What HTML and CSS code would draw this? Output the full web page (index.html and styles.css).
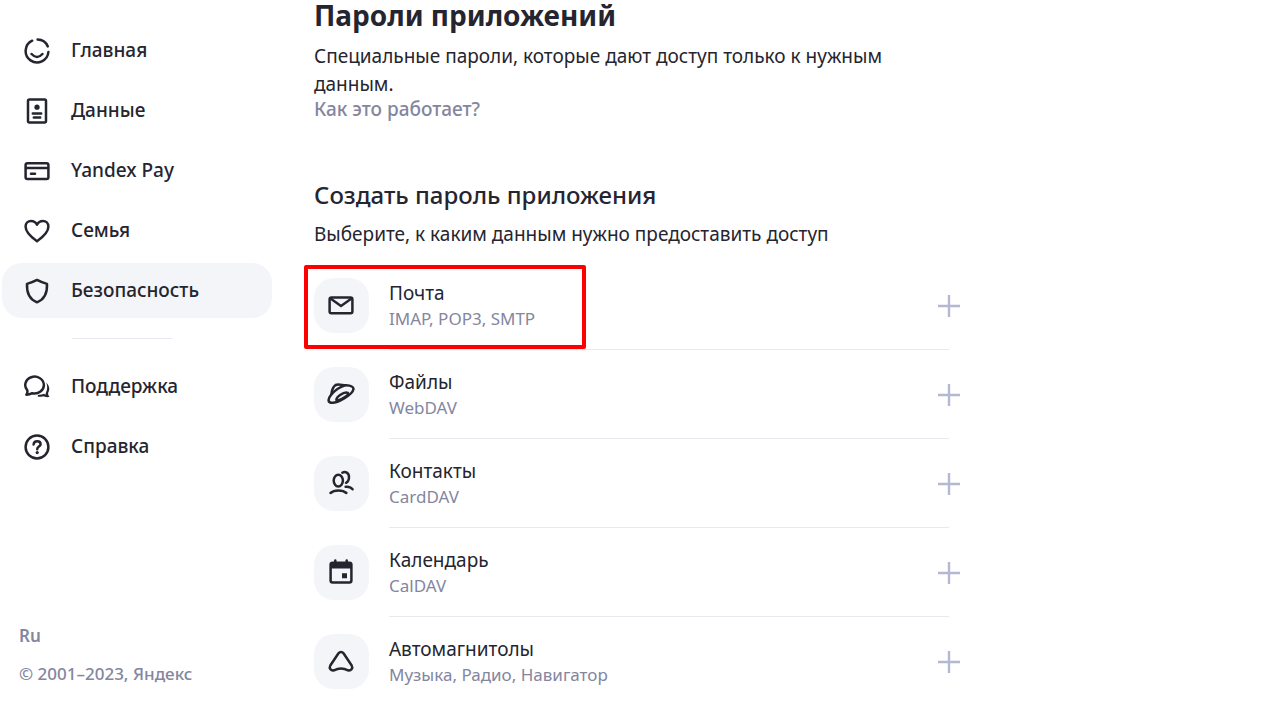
FILE: index.html
```html
<!DOCTYPE html>
<html lang="ru">
<head>
<meta charset="utf-8">
<meta name="viewport" content="width=device-width, initial-scale=1">
<title>Пароли приложений</title>
<link rel="stylesheet" href="styles.css">
</head>
<body>
<div class="layout">
  <aside class="sidebar">
    <nav class="nav">
      <a class="nav-link" href="#home"><svg class="icon" viewBox="0 0 28 28"><path d="M9.2 3.7A11.4 11.4 0 1 0 25.4 15M14.6 2.6A11.4 11.4 0 0 1 24.8 9.4M8.6 17Q14 23 19.4 17"/></svg><span class="nav-label">Главная</span></a>
      <a class="nav-link" href="#data"><svg class="icon" viewBox="0 0 28 28"><rect x="5" y="2.6" width="18" height="23" rx="1.5"/><circle class="solid" cx="14" cy="10.2" r="2.6"/><path d="M9.8 16.4h8.4M10.8 20.4h6.4"/></svg><span class="nav-label">Данные</span></a>
      <a class="nav-link" href="#pay"><svg class="icon" viewBox="0 0 28 28"><rect x="2.6" y="6.2" width="22.8" height="15.8" rx="1.8"/><path d="M3 11h22M8 16.7h4"/></svg><span class="nav-label">Yandex Pay</span></a>
      <a class="nav-link" href="#family"><svg class="icon" viewBox="0 0 28 28"><path d="M14 24.2C6 18.5 2.6 14.5 2.6 9.7C2.6 6 5.2 4 8 4C11 4 13 5.6 14 7.8C15 5.6 17 4 20 4C22.8 4 25.4 6 25.4 9.7C25.4 14.5 22 18.5 14 24.2Z"/></svg><span class="nav-label">Семья</span></a>
      <a class="nav-link active" href="#security" aria-current="page"><svg class="icon" viewBox="0 0 28 28"><path d="M14 2.9C10.6 4.7 7.4 6 4 6.9C3.6 15 5.5 22 14 25.3C22.5 22 24.4 15 24 6.9C20.6 6 17.4 4.7 14 2.9Z"/></svg><span class="nav-label">Безопасность</span></a>
    </nav>
    <hr class="nav-divider">
    <nav class="nav">
      <a class="nav-link" href="#support"><svg class="icon" viewBox="0 0 28 28"><path d="M3.4 21.8C4.4 20.3 4.6 18.8 4.3 17.3A9.3 8.4 0 1 1 9.3 20.2C7.4 21.3 5.4 21.8 3.4 21.8Z"/><path class="solid" d="M23.2 9.6C26.4 12.6 27.2 16.6 25.1 19.9C25 21.6 25.6 22.7 26.6 23.8C23.8 24.7 21.6 23.7 20.2 23.2C18.2 24 16.2 24 14.6 23.6L15 21.9C17.2 21.6 19.5 21.3 20.9 20.7L22.9 21.8C22.5 20.8 22.7 19.8 23.2 19C24.7 16 24.3 12.6 23.2 9.6Z"/></svg><span class="nav-label">Поддержка</span></a>
      <a class="nav-link" href="#help"><svg class="icon" viewBox="0 0 28 28"><circle cx="14" cy="14" r="11.4"/><path d="M10.6 11.5C10.8 9.4 12.2 8.3 14.2 8.3C16.3 8.3 17.6 9.5 17.6 11.2C17.6 13.6 14.2 13.6 14.2 16.2"/><circle class="solid" cx="14.2" cy="19.6" r="1.6"/></svg><span class="nav-label">Справка</span></a>
    </nav>
    <footer class="footer">
      <a class="lang" href="#lang">Ru</a>
      <span>© 2001–2023, Яндекс</span>
    </footer>
  </aside>

  <main class="content">
    <h1 class="title">Пароли приложений</h1>
    <p class="text">Специальные пароли, которые дают доступ только к нужным данным.</p>
    <a class="how" href="#how">Как это работает?</a>
    <h2 class="subtitle">Создать пароль приложения</h2>
    <p class="text">Выберите, к каким данным нужно предоставить доступ</p>
    <ul class="apps">
      <li class="app marked">
        <span class="tile"><svg class="icon" viewBox="0 0 28 28"><rect x="2.6" y="6.6" width="22.8" height="15.6" rx="1.8"/><path d="M3.5 7.6L14 15L24.5 7.6"/></svg></span>
        <div class="app-body"><div class="app-text"><h3 class="app-name">Почта</h3><p class="app-note">IMAP, POP3, SMTP</p></div>
        <button class="add" type="button" aria-label="Добавить: Почта"><svg class="plus" viewBox="0 0 22 22"><path d="M11 0v22M0 11h22"/></svg></button></div>
      </li>
      <li class="app">
        <span class="tile"><svg class="icon" viewBox="0 0 28 28"><path d="M4 22.7C.5 22 1 18.5 4.5 14.2C4.8 10.5 6.6 6.4 8.6 5C11.2 3.9 14.5 5 19 5.3C24 5.6 26.9 6.8 26.4 9.4C25.6 14.5 10 23.9 4 22.7Z"/><path d="M4.5 14.2C8.5 9.8 13 7 18 5.4"/><path d="M9.8 21C7.6 17.5 17.2 11.3 20.8 12.9C23 14.2 17 18.5 9.8 21Z"/></svg></span>
        <div class="app-body"><div class="app-text"><h3 class="app-name">Файлы</h3><p class="app-note">WebDAV</p></div>
        <button class="add" type="button" aria-label="Добавить: Файлы"><svg class="plus" viewBox="0 0 22 22"><path d="M11 0v22M0 11h22"/></svg></button></div>
      </li>
      <li class="app">
        <span class="tile"><svg class="icon" viewBox="0 0 28 28"><ellipse cx="11.3" cy="11.6" rx="4.6" ry="5.8"/><path d="M3.5 24C7 20.6 15.8 20.6 19.4 24M15.3 3.7C18.3 1.8 22 4 22 8C22 10.8 20.8 13 19 13.8M18.6 17.8C21.4 17.5 24 18.4 25.6 20.3"/></svg></span>
        <div class="app-body"><div class="app-text"><h3 class="app-name">Контакты</h3><p class="app-note">CardDAV</p></div>
        <button class="add" type="button" aria-label="Добавить: Контакты"><svg class="plus" viewBox="0 0 22 22"><path d="M11 0v22M0 11h22"/></svg></button></div>
      </li>
      <li class="app">
        <span class="tile"><svg class="icon" viewBox="0 0 28 28"><rect x="3.6" y="4.8" width="20.8" height="19.8" rx="2"/><path class="solid" d="M3.5 5h21v5.5h-21zM15 15.3h5v5h-5z"/><path d="M8.3 2.6v3M19.7 2.6v3"/></svg></span>
        <div class="app-body"><div class="app-text"><h3 class="app-name">Календарь</h3><p class="app-note">CalDAV</p></div>
        <button class="add" type="button" aria-label="Добавить: Календарь"><svg class="plus" viewBox="0 0 22 22"><path d="M11 0v22M0 11h22"/></svg></button></div>
      </li>
      <li class="app">
        <span class="tile"><svg class="icon" viewBox="0 0 28 28"><path d="M11.5 6.3C12.8 4.6 15.2 4.6 16.5 6.3L24.7 18.5C26.3 21.3 24 24 21 23.3C16.5 21 11.5 21 7 23.3C4 24 1.7 21.3 3.3 18.5Z"/></svg></span>
        <div class="app-body"><div class="app-text"><h3 class="app-name">Автомагнитолы</h3><p class="app-note">Музыка, Радио, Навигатор</p></div>
        <button class="add" type="button" aria-label="Добавить: Автомагнитолы"><svg class="plus" viewBox="0 0 22 22"><path d="M11 0v22M0 11h22"/></svg></button></div>
      </li>
    </ul>
  </main>
</div>
</body>
</html>
```
FILE: styles.css
```css
*, *::before { box-sizing: border-box; }
body {
  margin: 0;
  background: #fff;
  color: #252530;
  font-family: "Noto Sans", "Open Sans", sans-serif;
  font-size: 19px;
  line-height: 28px;
}
h1, h2, h3, p, ul { margin: 0; padding: 0; font-weight: 400; }
a { color: inherit; text-decoration: none; }

.layout { display: flex; min-height: 100vh; }

.sidebar {
  flex: 0 0 272px;
  display: flex;
  flex-direction: column;
  padding: 23px 0 17px 2px;
}
.nav { display: flex; flex-direction: column; gap: 5px; }
.nav-link {
  display: flex;
  align-items: center;
  gap: 20px;
  height: 55px;
  padding: 0 21px;
  border-radius: 20px;
}
.nav-link.active { background: #f4f5f9; }
.nav-label { padding-bottom: 2px; font-weight: 500; }
.nav-divider {
  width: 100px;
  height: 1px;
  margin: 20px 0 20px 70px;
  border: 0;
  background: #e8e8f0;
}

.icon {
  width: 28px;
  height: 28px;
  flex: none;
  fill: none;
  stroke: #252530;
  stroke-width: 2.5;
  stroke-linecap: round;
  stroke-linejoin: round;
}
.icon .solid { fill: #252530; stroke: none; }

.footer {
  display: flex;
  flex-direction: column;
  gap: 10px;
  margin-top: auto;
  padding-left: 17px;
  color: #8486a0;
  font-size: 17px;
}
.footer span { font-weight: 500; }
.lang { font-weight: 600; }

.content { flex: 1; padding-left: 42px; }
.content > * { max-width: 635px; }
.title { font-size: 28px; line-height: 30px; font-weight: 700; margin-bottom: 12px; }
.text { max-width: 600px; }
.how { display: block; color: #8486a0; font-weight: 500; line-height: 22px; }
.subtitle { margin: 59px 0 9px; font-size: 24px; line-height: 32px; font-weight: 500; }

.apps { margin-top: 13px; list-style: none; }
.app { position: relative; display: flex; gap: 20px; }
.tile {
  width: 55px;
  height: 55px;
  margin-top: 17px;
  padding: 13px;
  border-radius: 20px;
  background: #f4f5f9;
}
.app-body {
  flex: 1;
  display: flex;
  justify-content: space-between;
  padding: 19px 0 17px;
  border-bottom: 1px solid #e8e8ee;
}
.app:last-child .app-body { border-bottom: 0; }
.app-name { font-size: 19px; line-height: 26px; }
.app-note { font-size: 17px; line-height: 26px; color: #8486a0; }
.add {
  width: 22px;
  height: 22px;
  margin: 15px -11px 0 0;
  padding: 0;
  border: 0;
  background: none;
  cursor: pointer;
}
.plus { display: block; width: 22px; height: 22px; stroke: #b4b8d2; stroke-width: 2.4; }

.marked::before {
  content: "";
  position: absolute;
  top: 4px;
  left: -10px;
  width: 282px;
  height: 84px;
  border: 4px solid #fe0000;
  border-radius: 2px;
  pointer-events: none;
}
```
